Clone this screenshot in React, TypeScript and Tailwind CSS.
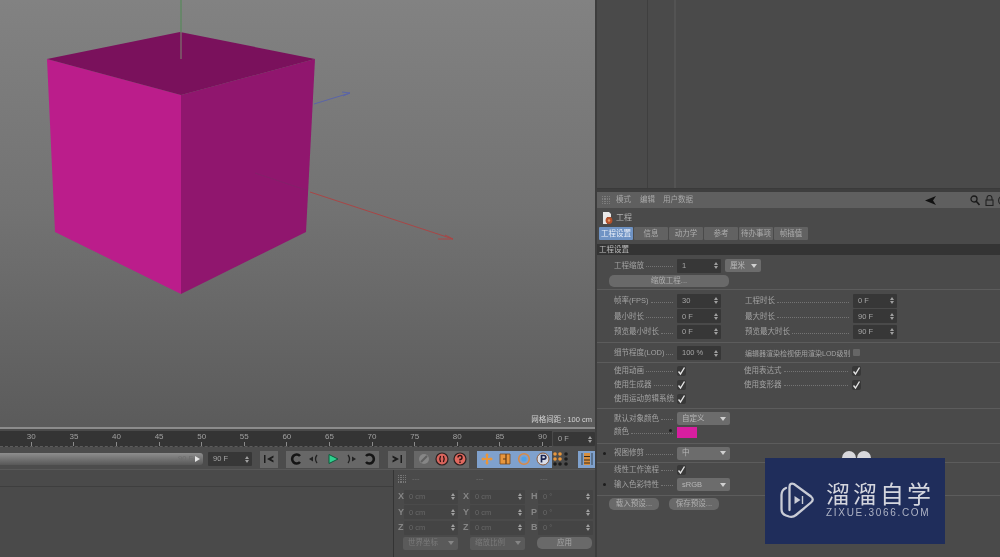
import React from "react";

const Spin = () => (
  <svg width="4" height="7" viewBox="0 0 4 7" className="shrink-0">
    <path d="M2 0L4 3H0ZM2 7L0 4H4Z" fill="#a0a0a0" />
  </svg>
);

const Field = ({ v, w = "w-[44px]", dim = false }: { v: string; w?: string; dim?: boolean }) => (
  <div className={`${w} h-[14px] rounded-[1px] flex items-center justify-between pl-[5px] pr-[3px] shrink-0 ${dim ? "bg-[#444444] text-[#686868]" : "bg-[#373737] text-[#a6a6a6]"}`}>
    <span>{v}</span>
    <Spin />
  </div>
);

const Select = ({ v, w = "w-[53px]", dim = false }: { v: string; w?: string; dim?: boolean }) => (
  <div className={`${w} h-[13px] rounded-[2px] flex items-center justify-between pl-[5px] pr-[4px] shrink-0 ${dim ? "bg-[#5a5a5a] text-[#7a7a7a]" : "bg-[#6c6c6c] text-[#b8b8b8]"}`}>
    <span>{v}</span>
    <svg width="6" height="4" viewBox="0 0 6 4"><path d="M0 0H6L3 4Z" fill={dim ? "#858585" : "#d0d0d0"} /></svg>
  </div>
);

const Check = () => (
  <div className="w-[9px] h-[10px] bg-[#383838] rounded-[2px] flex items-center justify-center shrink-0">
    <svg width="9" height="10" viewBox="0 0 9 10"><path d="M1.5 5.5L3.5 8L7.5 1.5" stroke="#e4e4e4" strokeWidth="1.4" fill="none" /></svg>
  </div>
);

const Label = ({ t, w = "w-[63px]", dots = true }: { t: string; w?: string; dots?: boolean }) => (
  <div className={`${w} shrink-0 flex items-center whitespace-nowrap text-[#a2a2a2]`}>
    <span>{t}</span>
    {dots && <div className="flex-1 self-end mb-[2px] ml-[2px] mr-[4px] border-b border-dotted border-[#747474]" />}
  </div>
);

const Divider = ({ mt, mb }: { mt: string; mb: string }) => <div className={`h-px bg-[#5c5c5c] ${mt} ${mb}`} />;

const Row = ({ children, h = "h-[15.5px]" }: { children: React.ReactNode; h?: string }) => (
  <div className={`${h} flex items-center pl-[17px]`}>{children}</div>
);

const Dot = ({ pos = "left-[6px] top-[6px]" }: { pos?: string }) => <div className={`absolute ${pos} w-[3px] h-[3px] rounded-full bg-[#1d1d1d]`} />;

const Tab = ({ t, on = false }: { t: string; on?: boolean }) => (
  <div className={`w-[34px] h-[13px] flex items-center justify-center rounded-[1px] ${on ? "bg-[#6f93c4] text-[#e8eef8]" : "bg-[#626262] text-[#adadad]"}`}>{t}</div>
);

const Btn = ({ children, blue = false, w = "w-[18px]" }: { children: React.ReactNode; blue?: boolean; w?: string }) => (
  <div className={`${w} h-[17px] flex items-center justify-center shrink-0 ${blue ? "bg-[#7fa1cd]" : "bg-[#676767]"}`}>{children}</div>
);

const I = ({ children, s = 14 }: { children: React.ReactNode; s?: number }) => (
  <svg width={s} height={s} viewBox="0 0 14 14">{children}</svg>
);

const ticks = [30, 35, 40, 45, 50, 55, 60, 65, 70, 75, 80, 85, 90];

const CoordRow = ({ a, b, c, u = "0 cm" }: { a: string; b: string; c: string; u?: string }) => (
  <div className="h-[15.5px] flex items-center pl-[1px] text-[#868686] text-[9px]">
    <span className="w-[6px] font-bold">{a}</span>
    <div className="text-[7.5px]"><Field v={u} w="w-[54px]" dim /></div>
    <span className="w-[12px] pl-[5px] font-bold">{b}</span>
    <div className="text-[7.5px]"><Field v={u} w="w-[55px]" dim /></div>
    <span className="w-[13px] pl-[6px] font-bold">{c}</span>
    <div className="text-[7.5px]"><Field v={"0 °"} w="w-[55px]" dim /></div>
  </div>
);

const Grip = ({ c }: { c: string }) => (
  <div className="w-[8px] h-[8px] grid grid-cols-4 gap-px shrink-0">
    {Array.from({ length: 16 }).map((_, i) => (
      <div key={i} className={c} />
    ))}
  </div>
);

export default function App() {
  return (
    <div className="relative w-[1000px] h-[557px] flex overflow-hidden bg-[#4a4a4a] text-[7.5px] leading-none font-['Liberation_Sans','Noto_Sans_CJK_SC',sans-serif] blur-[0.45px]">
      {/* left column */}
      <div className="w-[595px] shrink-0 flex flex-col">
        <div className="relative h-[427px] bg-gradient-to-b from-[#828282] via-[#727272] to-[#5b5b5b]">
          <svg width="595" height="427" viewBox="0 0 595 427" className="block">
            <polygon points="47,59 181,95 181,294 55,232" fill="#bb1d8b" />
            <polygon points="181,95 315,59 306,232 181,294" fill="#90166e" />
            <polygon points="47,59 180,32 315,59 181,95" fill="#7a115c" />
            <path d="M181 0V32" stroke="#4f8a52" strokeWidth="1" />
            <path d="M181 32V59" stroke="#7d8a70" strokeWidth="1" />
            <path d="M314 104L350 93M342 92L350 93L343 96" stroke="#5a64a8" strokeWidth="1" fill="none" />
            <path d="M310 192L453 239M438 239H453L445 235" stroke="#a84646" strokeWidth="1" fill="none" />
            <path d="M255 173L306 190" stroke="#84206a" strokeWidth="1" />
          </svg>
          <div className="absolute right-[3px] bottom-[1px] text-[#d4d4d4] h-[12px] flex items-center">网格间距 : 100 cm</div>
        </div>
        <div className="h-[2px] bg-[#8c8c8c]" />
        {/* ruler */}
        <div className="h-[2px] bg-[#4a4a4a]" />
        <div className="h-[16px] flex items-stretch">
          <div className="w-[552px] bg-[#343434] flex pl-[10px] text-[#a0a0a0] text-[8px] border-b border-dashed border-[#5c5c5c]">
            {ticks.map((n) => (
              <div key={n} className="w-[42.6px] shrink-0 flex flex-col items-center pt-[2px]">
                <span>{n}</span>
                <div className="w-px h-[4px] bg-[#8a8a8a] mt-[1px]" />
              </div>
            ))}
          </div>
          <div className="flex-1 pl-[1px] flex items-center">
            <Field v="0 F" w="w-[42px]" />
          </div>
        </div>
        {/* controls */}
        <div className="h-[23px] pt-[2px] flex items-center border-b border-[#585858] bg-[#4c4c4c]">
          <div className="w-[203px] h-[12px] rounded-r-[3px] bg-gradient-to-b from-[#8e8e8e] to-[#585858] flex items-center justify-end gap-[2px] pr-[3px] text-[#6d6d6d] shrink-0">
            <span>90 F</span>
            <svg width="5" height="6" viewBox="0 0 5 6"><path d="M0 0L5 3L0 6Z" fill="#e6e6e6" /></svg>
          </div>
          <div className="ml-[5px]"><Field v="90 F" w="w-[44px]" /></div>
          <div className="ml-[8px]">
            <Btn><I><path d="M2 3V11H3.5V3ZM11.5 3.5L5 7L11.5 10.5V8.5L9 7L11.5 5.5Z" fill="#1c1c1c" /></I></Btn>
          </div>
          <div className="ml-[8px] flex">
            <Btn w="w-[19px]"><I><path d="M11 4A4.5 4.5 0 1 0 11 10" stroke="#151515" strokeWidth="2.6" fill="none" /></I></Btn>
            <Btn w="w-[18px]"><I><path d="M2 7L6 4.5V9.5Z" fill="#222" /><path d="M10 3Q7 7 10 11" stroke="#222" strokeWidth="1.3" fill="none" /></I></Btn>
            <Btn w="w-[19px]"><I><path d="M3 2.5L12 7L3 11.5Z" fill="#2fcf8e" stroke="#0e5a3c" strokeWidth="1" /></I></Btn>
            <Btn w="w-[18px]"><I><path d="M12 7L8 4.5V9.5Z" fill="#222" /><path d="M4 3Q7 7 4 11" stroke="#222" strokeWidth="1.3" fill="none" /></I></Btn>
            <Btn w="w-[19px]"><I><path d="M3 4A4.5 4.5 0 1 1 3 10" stroke="#151515" strokeWidth="2.6" fill="none" /></I></Btn>
          </div>
          <div className="ml-[9px]">
            <Btn><I><path d="M12 3V11H10.5V3ZM2.5 3.5L9 7L2.5 10.5V8.5L5 7L2.5 5.5Z" fill="#1c1c1c" /></I></Btn>
          </div>
          <div className="ml-[8px] flex">
            <Btn w="w-[19px]"><I><circle cx="7" cy="7" r="5" fill="#868686" /><path d="M4 10L10 4" stroke="#5f5f5f" strokeWidth="2" /></I></Btn>
            <Btn w="w-[18px]"><I><circle cx="7" cy="7" r="6" fill="#d8645c" stroke="#2c2020" strokeWidth="1.2" /><path d="M5.6 4Q4 7 5.6 10M8.4 4Q10 7 8.4 10" stroke="#2c1010" strokeWidth="1.3" fill="none" /></I></Btn>
            <Btn w="w-[18px]"><I><circle cx="7" cy="7" r="6" fill="#e0685e" stroke="#2c2020" strokeWidth="1.2" /><path d="M5 5.5A2 2 0 1 1 7 7.5V8.5M7 9.5V11" stroke="#2c1010" strokeWidth="1.4" fill="none" /></I></Btn>
          </div>
          <div className="ml-[8px] flex">
            <Btn blue w="w-[19px]"><I><path d="M7 1L9 3.5H8V6H10.5V5L13 7L10.5 9V8H8V10.5H9L7 13L5 10.5H6V8H3.5V9L1 7L3.5 5V6H6V3.5H5Z" fill="#e8963c" /></I></Btn>
            <Btn blue w="w-[18px]"><I><path d="M2 2H12V12H2Z" fill="#e8963c" stroke="#7a4a1c" strokeWidth="0.8" /><path d="M8 2V7H5M8 7V12" stroke="#5e3a18" strokeWidth="1.2" fill="none" /></I></Btn>
            <Btn blue w="w-[19px]"><I><circle cx="7" cy="7" r="5.3" fill="none" stroke="#d98a44" strokeWidth="1.6" /><circle cx="7" cy="7" r="2.6" fill="#4ea2e8" /></I></Btn>
            <Btn blue w="w-[19px]"><I><circle cx="7" cy="7" r="6" fill="#d9dde8" stroke="#8a5a3a" strokeWidth="1" /><path d="M5.5 10.5V3.5H8Q9.8 3.5 9.8 5.3T8 7.2H5.5" stroke="#1b2550" strokeWidth="1.7" fill="none" /></I></Btn>
          </div>
          <div className="w-[17px] h-[17px] grid grid-cols-3 gap-[1px] p-[1px] shrink-0">
            {["#e8963c", "#e8963c", "#1c1c1c", "#e8963c", "#e8963c", "#1c1c1c", "#1c1c1c", "#1c1c1c", "#1c1c1c"].map((c, i) => (
              <svg key={i} width="4" height="4" viewBox="0 0 4 4"><circle cx="2" cy="2" r="1.8" fill={c} /></svg>
            ))}
          </div>
          <div className="ml-[9px]">
            <Btn blue><I><path d="M4 1H10V13H4Z" fill="#d9903f" /><path d="M4 4.5H10M4 8H10M4 11H10" stroke="#3a2a1a" strokeWidth="1" /><path d="M2 1V13M12 1V13" stroke="#35424f" strokeWidth="1" /></I></Btn>
          </div>
        </div>
        {/* bottom */}
        <div className="flex-1 flex">
          <div className="w-[393px] shrink-0 flex flex-col">
            <div className="h-[17px] border-b border-[#3e3e3e]" />
          </div>
          <div className="flex-1 border-l border-[#343434] flex flex-col pl-[3px]">
            <div className="h-[17px] flex items-center text-[#6f6f6f]">
              <div className="ml-[1px]"><Grip c="bg-[#777777]" /></div>
              <span className="ml-[6px] w-[64px]">---</span>
              <span className="w-[64px]">---</span>
              <span>---</span>
            </div>
            <div className="h-[2px]" />
            <CoordRow a="X" b="X" c="H" />
            <CoordRow a="Y" b="Y" c="P" />
            <CoordRow a="Z" b="Z" c="B" />
            <div className="mt-[1px] flex items-center pl-[6px]">
              <Select v="世界坐标" w="w-[55px]" dim />
              <div className="ml-[12px]"><Select v="缩放比例" w="w-[55px]" dim /></div>
              <div className="ml-[12px] w-[55px] h-[12px] rounded-[5px] bg-[#696969] text-[#a8a8a8] flex items-center justify-center">应用</div>
            </div>
          </div>
        </div>
      </div>
      {/* right column */}
      <div className="flex-1 flex flex-col border-l-2 border-[#3d3d3d]">
        <div className="h-[189px] flex border-b border-[#3a3a3a]">
          <div className="w-[51px] border-r border-[#3f3f3f]" />
          <div className="w-[28px] border-r-2 border-[#535353]" />
        </div>
        <div className="h-[3px] bg-[#3e3e3e]" />
        <div className="h-[16px] bg-[#5f5f5f] flex items-center pl-[5px] text-[#a8a8a8] gap-[10px]">
          <Grip c="bg-[#7d7d7d]" />
          <span className="-ml-[4px]">模式</span>
          <span className="-ml-[1px]">编辑</span>
          <span className="-ml-[2px]">用户数据</span>
          <div className="ml-auto flex items-center gap-[34px] -mr-[4px]">
            <svg width="11" height="9" viewBox="0 0 11 9"><path d="M0 4.5L11 0L8 4.5L11 9Z" fill="#111" /></svg>
            <div className="flex items-center gap-[5px]">
              <svg width="10" height="11" viewBox="0 0 10 11"><circle cx="4" cy="4" r="3" fill="none" stroke="#1a1a1a" strokeWidth="1.3" /><path d="M6 6L9.5 10" stroke="#1a1a1a" strokeWidth="1.6" /></svg>
              <svg width="9" height="11" viewBox="0 0 9 11"><path d="M2 5V3A2.5 2.5 0 0 1 7 3V5" fill="none" stroke="#222" strokeWidth="1.1" /><rect x="1" y="5" width="7" height="5.5" fill="none" stroke="#222" strokeWidth="1.1" /></svg>
              <svg width="7" height="11" viewBox="0 0 7 11" className="-ml-[2px]"><circle cx="6" cy="5.5" r="4.4" fill="none" stroke="#222" strokeWidth="1.1" /></svg>
            </div>
          </div>
        </div>
        <div className="h-[19px] flex items-center pl-[5px] gap-[3px] text-[#b0b0b0]">
          <svg width="11" height="12" viewBox="0 0 11 12">
            <path d="M1 0H7L9 2V5H5V12H1Z" fill="#e8e8e8" />
            <circle cx="7" cy="8.5" r="3.4" fill="#b5502a" />
            <circle cx="7" cy="8.5" r="1.2" fill="#e09a66" />
          </svg>
          <span className="text-[8px]">工程</span>
        </div>
        <div className="flex gap-[1px] pl-[2px]">
          <Tab t="工程设置" on />
          <Tab t="信息" />
          <Tab t="动力学" />
          <Tab t="参考" />
          <Tab t="待办事项" />
          <Tab t="帧插值" />
        </div>
        <div className="mt-[4px] h-[11px] bg-[#343434] text-[#bdbdbd] flex items-center pl-[2px]">工程设置</div>
        <div className="h-[3px]" />
        <Row h="h-[15px]">
          <Label t="工程缩放" />
          <Field v="1" />
          <div className="ml-[4px]"><Select v="厘米" w="w-[36px]" /></div>
        </Row>
        <div className="pl-[12px] mt-[2px]">
          <div className="w-[120px] h-[12px] rounded-[5px] bg-[#696969] text-[#adadad] flex items-center justify-center">缩放工程...</div>
        </div>
        <Divider mt="mt-[2px]" mb="mb-[3px]" />
        <Row>
          <Label t="帧率(FPS)" />
          <Field v="30" />
          <div className="ml-[24px]"><Label t="工程时长" w="w-[108px]" /></div>
          <Field v="0 F" />
        </Row>
        <Row>
          <Label t="最小时长" />
          <Field v="0 F" />
          <div className="ml-[24px]"><Label t="最大时长" w="w-[108px]" /></div>
          <Field v="90 F" />
        </Row>
        <Row>
          <Label t="预览最小时长" />
          <Field v="0 F" />
          <div className="ml-[24px]"><Label t="预览最大时长" w="w-[108px]" /></div>
          <Field v="90 F" />
        </Row>
        <Divider mt="mt-[2px]" mb="mb-[3px]" />
        <Row h="h-[15px]">
          <Label t="细节程度(LOD)" />
          <Field v="100 %" />
          <div className="ml-[24px] whitespace-nowrap text-[#a2a2a2] text-[7px]">编辑器渲染检视使用渲染LOD级别</div>
          <div className="ml-[3px] -mt-[2px] w-[7px] h-[7px] bg-[#666666] rounded-[1px]" />
        </Row>
        <Divider mt="mt-[1px]" mb="mb-[1px]" />
        <Row h="h-[14px]">
          <Label t="使用动画" />
          <Check />
          <div className="ml-[58px]"><Label t="使用表达式" w="w-[108px]" /></div>
          <Check />
        </Row>
        <Row h="h-[14px]">
          <Label t="使用生成器" />
          <Check />
          <div className="ml-[58px]"><Label t="使用变形器" w="w-[108px]" /></div>
          <Check />
        </Row>
        <Row h="h-[14px]">
          <Label t="使用运动剪辑系统" dots={false} />
          <Check />
        </Row>
        <Divider mt="mt-[2px]" mb="mb-[3px]" />
        <Row h="h-[14px]">
          <Label t="默认对象颜色" />
          <Select v="自定义" />
        </Row>
        <div className="relative">
          <Dot pos="left-[72px] top-[3px]" />
          <Row h="h-[13px]">
            <Label t="颜色" />
            <div className="w-[20px] h-[11px] bg-[#d81ea0]" />
          </Row>
        </div>
        <Divider mt="mt-[4px]" mb="mb-[2px]" />
        <div className="relative">
          <Dot />
          <Row h="h-[15px]">
            <Label t="视图修剪" />
            <Select v="中" />
          </Row>
        </div>
        <Divider mt="mt-[1px]" mb="mb-[0px]" />
        <Row h="h-[14px]">
          <Label t="线性工作流程" />
          <Check />
        </Row>
        <div className="relative">
          <Dot />
          <Row h="h-[16px]">
            <Label t="输入色彩特性" />
            <Select v="sRGB" />
          </Row>
        </div>
        <Divider mt="mt-[2px]" mb="mb-[2px]" />
        <div className="flex pl-[12px] gap-[10px]">
          <div className="w-[50px] h-[12px] rounded-[5px] bg-[#696969] text-[#b0b0b0] flex items-center justify-center">载入预设...</div>
          <div className="w-[50px] h-[12px] rounded-[5px] bg-[#696969] text-[#b0b0b0] flex items-center justify-center">保存预设...</div>
        </div>
      </div>
      {/* watermark */}
      <div className="absolute left-[842px] top-[451px] flex gap-[1px]">
        <div className="w-[14px] h-[14px] rounded-full bg-[#d8d8dc]" />
        <div className="w-[14px] h-[14px] rounded-full bg-[#d8d8dc]" />
      </div>
      <div className="absolute left-[765px] top-[458px] w-[180px] h-[86px] bg-[#1f2d5b] flex items-center pl-[15px]">
        <svg width="35" height="38" viewBox="0 0 35 38" className="shrink-0">
          <path d="M9.5 28V5Q9.5 0.5 14 2L31 14.5Q34.5 17.5 31 20.5L16 33Q13 35.5 9 34.5L6 33.5Q1.5 32 1.5 27V13Q1.5 8 6 6" fill="none" stroke="#c9ccd6" strokeWidth="2.3" strokeLinecap="round" />
          <path d="M14.5 14L20.5 18L14.5 22Z" fill="#c9ccd6" />
          <path d="M22.5 14V22" stroke="#c9ccd6" strokeWidth="1.4" />
        </svg>
        <div className="ml-[11px] -mt-[3px] flex flex-col">
          <div className="text-[24px] leading-[26px] tracking-[3px] mb-[1px] text-[#d4d6de] font-['Noto_Sans_CJK_SC',sans-serif] whitespace-nowrap">溜溜自学</div>
          <div className="text-[10px] leading-[12px] tracking-[1.7px] text-[#aeb3c4] whitespace-nowrap">ZIXUE.3066.COM</div>
        </div>
      </div>
    </div>
  );
}
